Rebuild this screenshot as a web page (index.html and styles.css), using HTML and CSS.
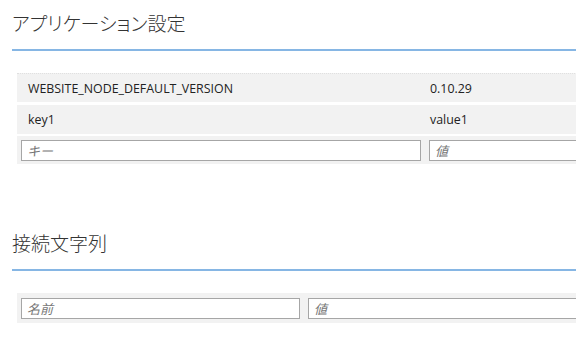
FILE: index.html
```html
<!DOCTYPE html>
<html lang="ja">
<head>
    <meta charset="UTF-8">
    <meta name="viewport" content="width=device-width, initial-scale=1.0">
    <title>設定</title>
    <link rel="stylesheet" href="styles.css">
</head>
<body>
    <div class="page">
        <div class="section">
            <h2>アプリケーション設定</h2>
            <div class="kv-table app-settings">
                <div class="kv-row first">
                    <div class="kv-key">WEBSITE_NODE_DEFAULT_VERSION</div>
                    <div class="kv-value">0.10.29</div>
                </div>
                <div class="kv-row">
                    <div class="kv-key">key1</div>
                    <div class="kv-value">value1</div>
                </div>
                <div class="kv-row new-row">
                    <div class="kv-key"><input type="text" placeholder="キー"></div>
                    <div class="kv-value"><input type="text" placeholder="値"></div>
                </div>
            </div>
        </div>

        <div class="section">
            <h2>接続文字列</h2>
            <div class="kv-table conn-strings">
                <div class="kv-row new-row tall">
                    <div class="kv-key"><input type="text" placeholder="名前"></div>
                    <div class="kv-value"><input type="text" placeholder="値"></div>
                </div>
            </div>
        </div>
    </div>
</body>
</html>
```

FILE: styles.css
```css
html, body {
    margin: 0;
    padding: 0;
    background-color: #fff;
    overflow: hidden;
}

body {
    font-family: "Open Sans", "Noto Sans CJK JP", sans-serif;
    font-size: 12.4px;
    color: #222;
}

.page {
    width: 576px;
    overflow: hidden;
}

.section {
    padding-left: 12px;
}

.section + .section {
    margin-top: 56px;
}

.section h2 {
    margin: 0;
    padding: 11px 0 14px 0;
    font-family: "Noto Sans CJK JP", sans-serif;
    font-weight: 300;
    font-size: 19px;
    line-height: 24px;
    font-feature-settings: "palt";
    color: #333;
    border-bottom: 2px solid #86b6e4;
}

.kv-table {
    margin-top: 22px;
    margin-left: 5px;
    width: 800px;
}

.kv-row {
    display: grid;
    height: 29px;
    margin-bottom: 3px;
    background-color: #f2f2f2;
    align-items: center;
}

.kv-row.first {
    border-top: 1px dotted #e0e0e0;
    height: 28px;
}

.app-settings .kv-row {
    grid-template-columns: 408px 1fr;
}

.conn-strings .kv-row {
    grid-template-columns: 287px 1fr;
}

.kv-key {
    padding-left: 11px;
}

.kv-value {
    padding-left: 5px;
}

.new-row {
    height: 28px;
    margin-bottom: 0;
    margin-top: -1px;
}

.new-row.tall {
    height: 30px;
    margin-top: 0;
}

.new-row .kv-key {
    padding-left: 4px;
}

.new-row .kv-value {
    padding-left: 4px;
}

.new-row input {
    display: block;
    box-sizing: border-box;
    width: calc(100% - 4px);
    height: 21px;
    margin: 0;
    padding: 0 5px;
    border: 1px solid #a6a6a6;
    border-radius: 0;
    background-color: #fff;
    font-family: "Noto Sans CJK JP", sans-serif;
    font-size: 13px;
    outline: none;
}

.new-row input::placeholder {
    font-style: italic;
    color: #777;
}
```
